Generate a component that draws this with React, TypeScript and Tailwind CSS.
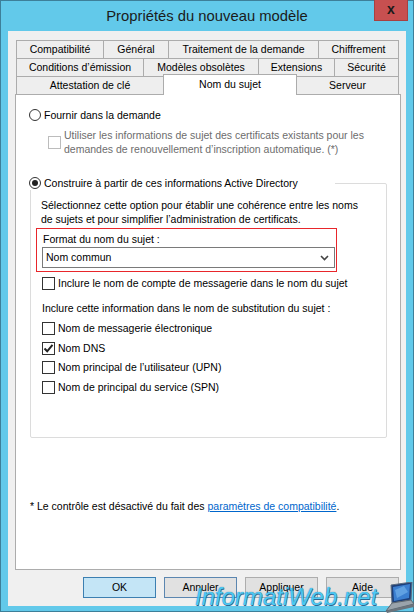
// Propriétés du nouveau modèle - certificate template dialog, "Nom du sujet" tab

const font = { fontFamily: '"Liberation Sans", Arial, sans-serif' };

type TabDef = { label: string; w: string; selected?: boolean };

const rows: TabDef[][] = [
    [
        { label: 'Compatibilité', w: 'w-[88px]' },
        { label: 'Général', w: 'w-[66px]' },
        { label: 'Traitement de la demande', w: 'w-[151px]' },
        { label: 'Chiffrement', w: 'w-[81px]' },
    ],
    [
        { label: 'Conditions d\u2019émission', w: 'w-[128px]' },
        { label: 'Modèles obsolètes', w: 'w-[116px]' },
        { label: 'Extensions', w: 'w-[77px]' },
        { label: 'Sécurité', w: 'w-[65px]' },
    ],
    [
        { label: 'Attestation de clé', w: 'w-[148px]' },
        { label: 'Nom du sujet', w: 'w-[134px]', selected: true },
        { label: 'Serveur', w: 'w-[103px]' },
    ],
];

function Radio({ checked }: { checked?: boolean }) {
    return (
        <span className="w-[12px] h-[12px] rounded-full border border-[#333] bg-white flex items-center justify-center shrink-0">
            {checked && <span className="w-[6px] h-[6px] rounded-full bg-[#222]" />}
        </span>
    );
}

function Checkbox({ checked, disabled }: { checked?: boolean; disabled?: boolean }) {
    return (
        <span
            className={`w-[13px] h-[13px] border bg-white flex items-center justify-center shrink-0 ${
                disabled ? 'border-[#bcbcbc]' : 'border-[#333]'
            }`}
        >
            {checked && (
                <svg width="11" height="11" viewBox="0 0 11 11">
                    <path d="M1.5 5.5 L4.2 8.3 L9.5 1.8" fill="none" stroke="#222" strokeWidth="2" />
                </svg>
            )}
        </span>
    );
}

function CheckRow({ label, checked, className = '' }: { label: string; checked?: boolean; className?: string }) {
    return (
        <div className={`flex items-center h-[14px] ml-[11px] ${className}`}>
            <Checkbox checked={checked} />
            <span className="ml-[3px] leading-[14px]">{label}</span>
        </div>
    );
}

function Laptop() {
    return (
        <svg width="32" height="31" viewBox="0 0 32 31">
            <polygon points="9,3 30,0 29,18 10,21" fill="#1d3f7a" stroke="#5b6d80" strokeWidth="1" />
            <polygon points="11,5 28,2 27,16 12,19" fill="#3b7fd0" />
            <polygon points="13,8 22,4 26,10 15,16" fill="#79b8ee" opacity="0.6" />
            <polygon points="10,21 29,18 32,22 4,29" fill="#9aa3ab" stroke="#5d666e" strokeWidth="1" />
            <polygon points="4,29 32,22 32,25 5,31" fill="#6b737b" />
        </svg>
    );
}

export default function App() {
    return (
        <div className="w-[414px] h-[614px] bg-white relative overflow-hidden text-[10.5px] text-black" style={font}>
            <div className="h-[612px] bg-[#62c9ea] border border-[#3d7f99] flex flex-col">
                {/* Title bar */}
                <div className="h-[30px] relative flex items-center justify-center shrink-0">
                    <span className="text-[14.8px] text-[#1b1b1b] pt-[1px]">Propriétés du nouveau modèle</span>
                    <div className="absolute right-[5px] -top-px w-[34px] h-[21px] bg-[#c75050] border border-[#a84040] border-t-0 flex items-center justify-center">
                        <span className="text-[14px] font-bold text-[#1a1a1a] leading-none -mt-[3px]">x</span>
                    </div>
                </div>

                {/* Client area */}
                <div className="mx-[7px] h-[575px] bg-[#f0f0f0] flex flex-col shrink-0">
                    {/* Tabs */}
                    <div className="pt-[9px] pl-[8px] flex flex-col">
                        {rows.map((row, ri) => (
                            <div key={ri} className={`flex h-[19px] ${ri > 0 ? '-mt-px' : ''} ${ri === 2 ? 'relative z-10' : ''}`}>
                                {row.map((t, ti) =>
                                    t.selected ? (
                                        <div
                                            key={t.label}
                                            className={`${t.w} h-[21px] -mt-[2px] -ml-px bg-white border-x border-t border-[#acacac] flex items-center justify-center leading-none pb-[1px]`}
                                        >
                                            {t.label}
                                        </div>
                                    ) : (
                                        <div
                                            key={t.label}
                                            className={`${t.w} h-[19px] ${ti > 0 ? '-ml-px' : ''} bg-[#eeeeee] border border-[#acacac] flex items-center justify-center leading-none`}
                                        >
                                            {t.label}
                                        </div>
                                    )
                                )}
                            </div>
                        ))}
                    </div>

                    {/* Panel */}
                    <div className="ml-[7px] -mt-px w-[386px] h-[476px] bg-white border border-[#acacac] flex flex-col shrink-0">
                        <div className="mt-[13px] ml-[13px] flex items-center h-[14px]">
                            <Radio />
                            <span className="ml-[3px] leading-[14px]">Fournir dans la demande</span>
                        </div>

                        <div className="mt-[6px] ml-[32px] flex items-center text-[#6d6d6d]">
                            <Checkbox disabled />
                            <span className="ml-[3px] leading-[14px]">
                                Utiliser les informations de sujet des certificats existants pour les
                                <br />
                                demandes de renouvellement d&#8217;inscription automatique. (*)
                            </span>
                        </div>

                        {/* Group box */}
                        <div className="mt-[27px] ml-[14px] w-[357px] border border-[#dcdcdc] rounded-[2px] flex flex-col pb-[43px]">
                            <div className="-mt-[8px] -ml-[2px] w-[306px] h-[14px] bg-white flex items-center">
                                <Radio checked />
                                <span className="ml-[3px] leading-[14px]">Construire à partir de ces informations Active Directory</span>
                            </div>

                            <p className="mt-[8px] ml-[10px] leading-[14px]">
                                Sélectionnez cette option pour établir une cohérence entre les noms
                                <br />
                                de sujets et pour simplifier l&#8217;administration de certificats.
                            </p>

                            <div className="mt-[2px] ml-[5px] w-[301px] h-[44px] border border-[#e8262b] flex flex-col">
                                <span className="mt-[3px] ml-[6px] leading-[14px]">Format du nom du sujet :</span>
                                <div className="mt-[1px] ml-[5px] w-[293px] h-[21px] border border-[#7a7a7a] bg-white flex items-center justify-between pl-[3px] pr-[5px]">
                                    <span className="leading-none">Nom commun</span>
                                    <svg width="9" height="6" viewBox="0 0 9 6">
                                        <path d="M1 1 L4.5 4.5 L8 1" fill="none" stroke="#444" strokeWidth="1.6" />
                                    </svg>
                                </div>
                            </div>

                            <CheckRow className="mt-[4px]" label="Inclure le nom de compte de messagerie dans le nom du sujet" />

                            <span className="mt-[11px] ml-[11px] leading-[14px]">
                                Inclure cette information dans le nom de substitution du sujet :
                            </span>
                            <CheckRow className="mt-[6px]" label="Nom de messagerie électronique" />
                            <CheckRow className="mt-[6px]" label="Nom DNS" checked />
                            <CheckRow className="mt-[5px]" label={'Nom principal de l\u2019utilisateur (UPN)'} />
                            <CheckRow className="mt-[6px]" label="Nom de principal du service (SPN)" />
                        </div>

                        <p className="mt-[61px] ml-[14px] leading-[14px]">
                            * Le contrôle est désactivé du fait des{' '}
                            <span className="text-[#0066cc] underline">paramètres de compatibilité</span>.
                        </p>
                    </div>

                    {/* Buttons */}
                    <div className="mt-[7px] pr-[7px] flex justify-end gap-[8px]">
                        <button className="w-[73px] h-[21px] bg-[#c4e5f6] border border-[#3c7fb1] leading-none">OK</button>
                        <button className="w-[73px] h-[21px] bg-[#e1e1e1] border border-[#5b86b0] leading-none">Annuler</button>
                        <button className="w-[73px] h-[21px] bg-[#e1e1e1] border border-[#adadad] leading-none">Appliquer</button>
                        <button className="w-[73px] h-[21px] bg-[#e1e1e1] border border-[#adadad] leading-none">Aide</button>
                    </div>
                </div>
            </div>

            {/* Watermark */}
            <div className="absolute left-[195px] top-[585px] pointer-events-none opacity-90">
                <span className="italic text-[24px] leading-none text-[#3cc6f5] [text-shadow:0_0_1px_#1a5a8a,0.5px_0.5px_0.5px_#1a5a8a]">
                    InformatiWeb.net
                </span>
            </div>
            <div className="absolute left-[382px] top-[582px]">
                <Laptop />
            </div>
        </div>
    );
}
